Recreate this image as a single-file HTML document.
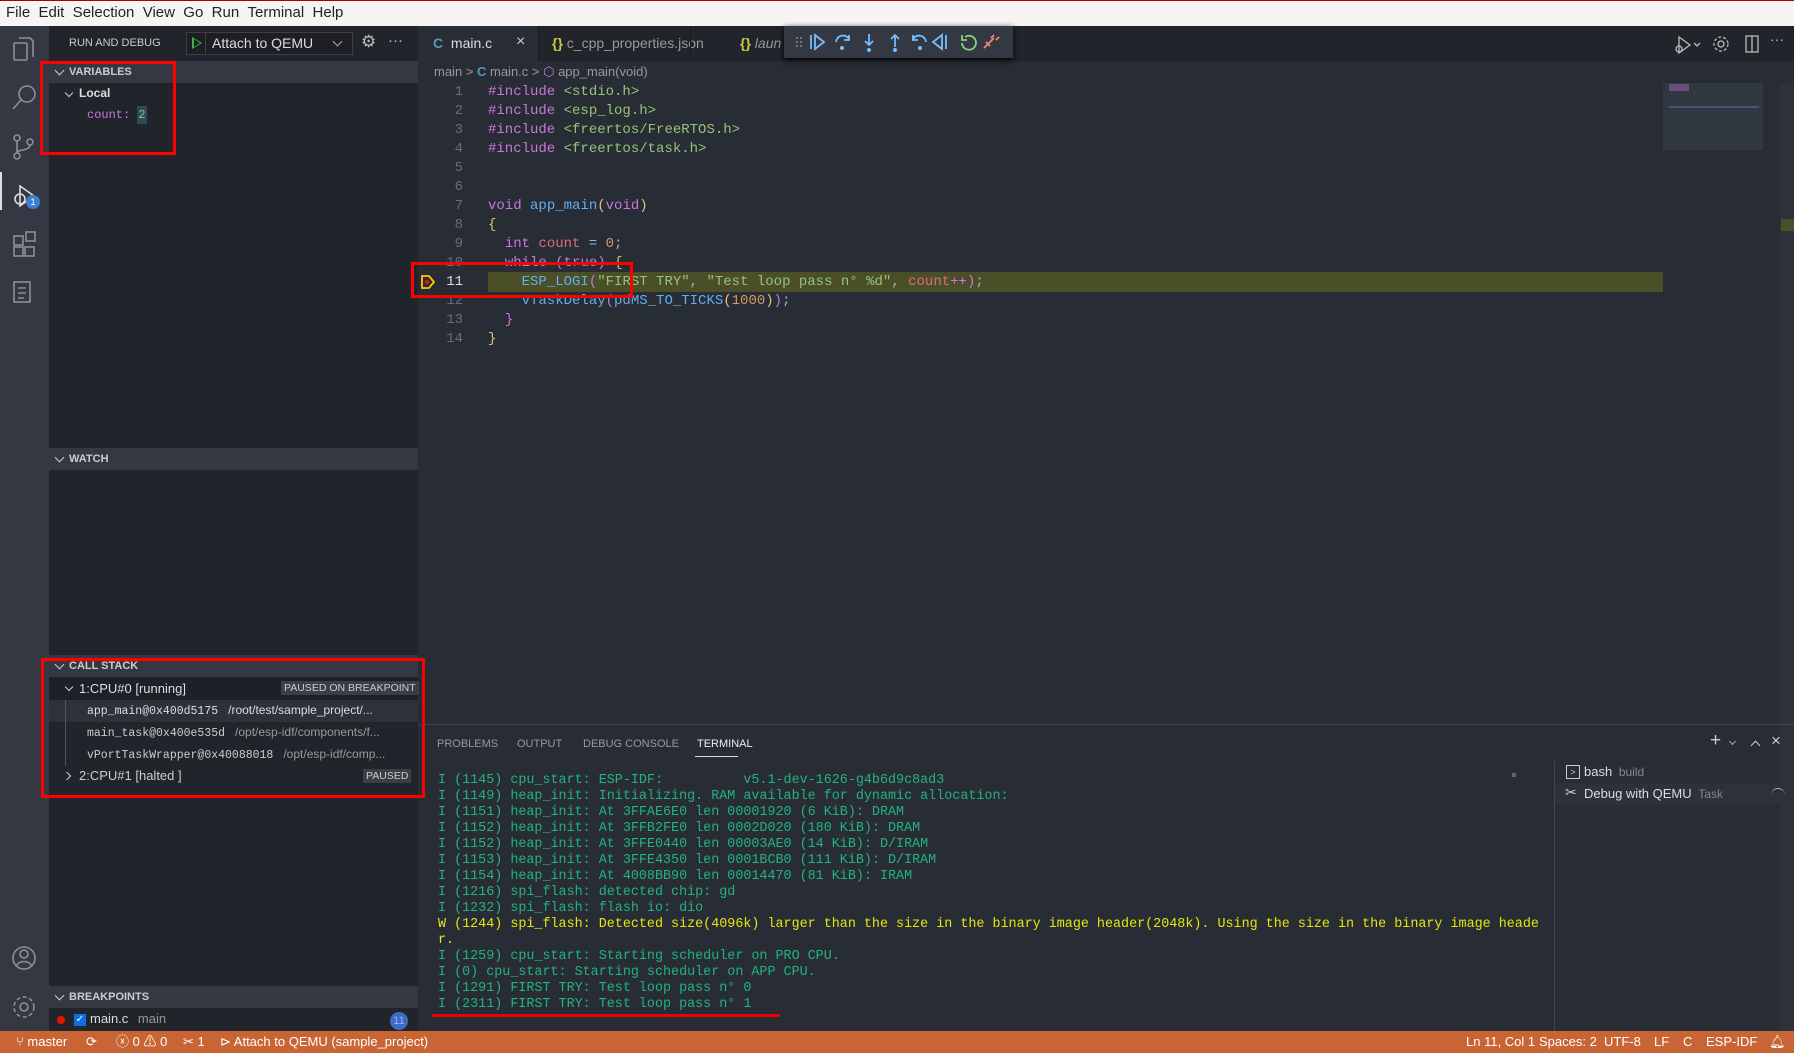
<!DOCTYPE html>
<html><head><meta charset="utf-8"><style>
*{box-sizing:border-box;margin:0;padding:0}
body{width:1794px;height:1053px;overflow:hidden;background:#282c34;font-family:"Liberation Sans",sans-serif;color:#abb2bf;position:relative;font-size:13px}
.a{position:absolute}
.mono{font-family:"Liberation Mono","DejaVu Sans Mono",monospace}
.hdr{position:absolute;left:49px;width:369px;height:22px;background:#333842;color:#ccc;font-weight:bold;font-size:11px;line-height:22px;padding-left:20px}
.hdr:before{content:"";position:absolute;left:7px;top:6px;width:6px;height:6px;border-right:1.5px solid #ccc;border-bottom:1.5px solid #ccc;transform:rotate(45deg)}
.red{position:absolute;border:3px solid #f00}
.ln{position:absolute;left:418px;width:45px;text-align:right;color:#636d83;font-size:14px}
.code{position:absolute;left:488px;font-size:14px;white-space:pre;color:#abb2bf}
.k{color:#c678dd}.s{color:#98c379}.f{color:#61afef}.n{color:#d19a66}.v{color:#e06c75}.y{color:#e5c07b}
.t{position:absolute;left:438px;font-size:13.4px;color:#23b37c;white-space:pre}
</style></head><body>
<!-- menu -->
<div class="a" style="left:0;top:0;width:1794px;height:26px;background:#f6f5f4;border-top:1px solid #a00"></div>
<div class="a" style="left:6px;top:4px;font-size:15px;color:#222;word-spacing:0">File&nbsp;&nbsp;Edit&nbsp;&nbsp;Selection&nbsp;&nbsp;View&nbsp;&nbsp;Go&nbsp;&nbsp;Run&nbsp;&nbsp;Terminal&nbsp;&nbsp;Help</div>
<!-- activity bar -->
<div class="a" style="left:0;top:26px;width:49px;height:1005px;background:#333842"></div>
<svg class="a" style="left:0;top:26px" width="49" height="1005" fill="none" stroke="#8a909a" stroke-width="1.6">
<rect x="14" y="17" width="13" height="17" rx="1"/><path d="M19 12h11l3 3v16"/>
<circle cx="27" cy="68" r="8"/><path d="M21 74l-8 9"/>
<circle cx="17" cy="112" r="3"/><circle cx="17" cy="130" r="3"/><circle cx="30" cy="116" r="3"/><path d="M17 115v12M30 119c0 6-13 4-13 8"/>
<path d="M20 160v20l14-10z" stroke="#ddd"/><circle cx="20" cy="173" r="5" stroke="#ddd"/>
<rect x="14" y="210" width="9" height="9"/><rect x="14" y="221" width="9" height="9"/><rect x="25" y="221" width="9" height="9"/><rect x="26" y="206" width="9" height="9"/>
<rect x="14" y="256" width="16" height="20"/><path d="M18 262h8M18 267h8M18 272h6"/>
<circle cx="24" cy="932" r="11"/><circle cx="24" cy="928" r="4"/><path d="M16 940c4-6 12-6 16 0"/>
<circle cx="24" cy="981" r="4"/><circle cx="24" cy="981" r="10" stroke-dasharray="4 2.5"/>
</svg>
<div class="a" style="left:0;top:172px;width:2px;height:38px;background:#ddd"></div>
<div class="a" style="left:26px;top:195px;width:14px;height:14px;border-radius:7px;background:#3d7fd6;color:#fff;font-size:9px;text-align:center;line-height:14px">1</div>
<!-- sidebar -->
<div class="a" style="left:49px;top:26px;width:369px;height:1005px;background:#21252b"></div>
<div class="a" style="left:69px;top:37px;font-size:11px;color:#ccc">RUN AND DEBUG</div>
<div class="a" style="left:186px;top:32px;width:167px;height:23px;background:#1d1f23;border:1px solid #3a3f4b"></div>
<div class="a" style="left:192px;top:37px;width:0;height:0;border-left:10px solid #3cb44b;border-top:6px solid transparent;border-bottom:6px solid transparent"></div>
<div class="a" style="left:194px;top:39px;width:0;height:0;border-left:6px solid #1d1f23;border-top:4px solid transparent;border-bottom:4px solid transparent"></div>
<div class="a" style="left:205px;top:32px;width:1px;height:23px;background:#3a3f4b"></div>
<div class="a" style="left:212px;top:35px;font-size:14px;color:#ddd">Attach to QEMU</div>
<div class="a" style="left:334px;top:38px;width:7px;height:7px;border-right:1.5px solid #aaa;border-bottom:1.5px solid #aaa;transform:rotate(45deg)"></div>
<div class="a" style="left:361px;top:32px;font-size:17px;color:#bbb">⚙</div>
<div class="a" style="left:388px;top:32px;font-size:15px;color:#bbb">···</div>
<div class="hdr" style="top:61px">VARIABLES</div>
<div class="a" style="left:66px;top:90px;width:6px;height:6px;border-right:1.5px solid #ccc;border-bottom:1.5px solid #ccc;transform:rotate(45deg)"></div>
<div class="a" style="left:79px;top:86px;font-size:12px;font-weight:bold;color:#ddd">Local</div>
<div class="a mono" style="left:87px;top:108px;font-size:12px;color:#c678dd">count: <span style="background:#2d4a5c;color:#98c379;padding:2px 1px">2</span></div>
<div class="hdr" style="top:448px">WATCH</div>
<div class="hdr" style="top:655px">CALL STACK</div>
<div class="a" style="left:49px;top:678px;width:369px;height:22px;background:#1d2026"></div>
<div class="a" style="left:66px;top:684px;width:6px;height:6px;border-right:1.5px solid #ccc;border-bottom:1.5px solid #ccc;transform:rotate(45deg)"></div>
<div class="a" style="left:79px;top:681px;font-size:13px;color:#ddd">1:CPU#0 [running]</div>
<div class="a" style="left:281px;top:681px;padding:1px 3px;background:#3a3e45;color:#ccc;font-size:10.5px">PAUSED ON BREAKPOINT</div>
<div class="a" style="left:49px;top:700px;width:369px;height:22px;background:#2c313a"></div>
<div class="a" style="left:65px;top:700px;width:1px;height:66px;background:#555"></div>
<div class="a" style="left:87px;top:703px;font-size:12px;color:#ddd"><span class="mono" style="font-size:11.5px">app_main@0x400d5175</span>&nbsp;&nbsp; /root/test/sample_project/...</div>
<div class="a" style="left:87px;top:725px;font-size:12px;color:#999"><span class="mono" style="font-size:11.5px;color:#ccc">main_task@0x400e535d</span>&nbsp;&nbsp; /opt/esp-idf/components/f...</div>
<div class="a" style="left:87px;top:747px;font-size:12px;color:#999"><span class="mono" style="font-size:11.5px;color:#ccc">vPortTaskWrapper@0x40088018</span>&nbsp;&nbsp; /opt/esp-idf/comp...</div>
<div class="a" style="left:64px;top:773px;width:6px;height:6px;border-right:1.5px solid #ccc;border-bottom:1.5px solid #ccc;transform:rotate(-45deg)"></div>
<div class="a" style="left:79px;top:768px;font-size:13px;color:#ccc">2:CPU#1 [halted ]</div>
<div class="a" style="left:363px;top:769px;padding:1px 3px;background:#3a3e45;color:#ccc;font-size:10.5px">PAUSED</div>
<div class="hdr" style="top:986px">BREAKPOINTS</div>
<div class="a" style="left:57px;top:1016px;width:8px;height:8px;border-radius:4px;background:#e51400"></div>
<div class="a" style="left:74px;top:1014px;width:12px;height:12px;background:#0e70e0;color:#fff;font-size:10px;line-height:12px;text-align:center">✓</div>
<div class="a" style="left:90px;top:1011px;font-size:13px;color:#ddd">main.c <span style="color:#999;margin-left:6px">main</span></div>
<div class="a" style="left:390px;top:1012px;width:18px;height:18px;border-radius:9px;background:#3d6bc4;color:#8fb0ff;font-size:11px;text-align:center;line-height:18px">11</div>
<div class="red" style="left:40px;top:61px;width:136px;height:94px"></div>
<div class="red" style="left:41px;top:658px;width:384px;height:140px"></div>
<!-- tabs -->
<div class="a" style="left:418px;top:26px;width:1376px;height:35px;background:#21252b"></div>
<div class="a" style="left:418px;top:26px;width:120px;height:35px;background:#282c34"></div>
<div class="a" style="left:433px;top:35px;font-size:14px;color:#ddd"><b style="color:#519aba">C</b>&nbsp; main.c</div>
<div class="a" style="left:516px;top:33px;font-size:16px;color:#ccc">×</div>
<div class="a" style="left:538px;top:26px;width:1px;height:35px;background:#181a1f"></div>
<div class="a" style="left:552px;top:35px;font-size:14px;color:#999"><b style="color:#cbcb41">{}</b> c_cpp_properties.json</div>
<div class="a" style="left:690px;top:26px;width:1px;height:35px;background:#181a1f"></div>
<div class="a" style="left:740px;top:35px;font-size:14px;color:#999"><b style="color:#cbcb41">{}</b> <i>laun</i></div>
<!-- debug toolbar -->
<div class="a" style="left:784px;top:26px;width:229px;height:32px;background:#333842;box-shadow:0 2px 6px #000"></div>
<svg class="a" style="left:784px;top:26px" width="229" height="32" fill="none" stroke-width="1.8">
<g fill="#888" stroke="none"><circle cx="13" cy="12" r="1"/><circle cx="17" cy="12" r="1"/><circle cx="13" cy="16" r="1"/><circle cx="17" cy="16" r="1"/><circle cx="13" cy="20" r="1"/><circle cx="17" cy="20" r="1"/></g>
<path d="M27 9v14M31 9l9 7-9 7z" stroke="#75beff"/>
<path d="M52 16a7 7 0 0 1 13-3M65 9v5h-5" stroke="#75beff"/><circle cx="58" cy="22" r="2" fill="#75beff" stroke="none"/>
<path d="M85 8v11M81 15l4 4 4-4" stroke="#75beff"/><circle cx="85" cy="24" r="2" fill="#75beff" stroke="none"/>
<path d="M111 21V9M107 13l4-4 4 4" stroke="#75beff"/><circle cx="111" cy="24" r="2" fill="#75beff" stroke="none"/>
<path d="M142 16a7 7 0 0 0-13-3M129 9v5h5" stroke="#75beff"/><circle cx="136" cy="22" r="2" fill="#75beff" stroke="none"/>
<path d="M162 9v14M158 9l-9 7 9 7z" stroke="#75beff"/>
<path d="M181 11a7 7 0 1 1-3 6M178 9v5h5" stroke="#89d185"/>
<path d="M200 22l10-10M202 16l4 4M207 12l3-3M212 14l3-3" stroke="#f48771"/>
</svg>
<svg class="a" style="left:1670px;top:30px" width="124" height="28" fill="none" stroke="#bbb" stroke-width="1.3">
<path d="M9 7v16l11-8z"/><circle cx="9" cy="19" r="3"/><path d="M24 13l3 3 3-3"/>
<circle cx="51" cy="14" r="3"/><circle cx="51" cy="14" r="7" stroke-dasharray="3 2"/>
<rect x="76" y="6" width="12" height="16"/><path d="M82 6v16"/>
</svg>
<div class="a" style="left:1770px;top:31px;color:#bbb;font-size:14px">···</div>
<!-- breadcrumb -->
<div class="a" style="left:434px;top:64px;font-size:13px;color:#999">main &gt; <b style="color:#519aba">C</b> main.c &gt; <span style="color:#b180d7">⬡</span> app_main(void)</div>
<!-- code -->
<div class="a" style="left:488px;top:272px;width:1175px;height:20px;background:#4b4f28"></div>
<div class="ln mono" style="top:83px;line-height:19px">1<br>2<br>3<br>4<br>5<br>6<br>7<br>8<br>9<br>10<br><span style="color:#ddd">11</span><br>12<br>13<br>14</div>
<svg class="a" style="left:420px;top:274px" width="16" height="16"><path d="M2 2h7l5 6-5 6H2z" fill="none" stroke="#ffcc00" stroke-width="1.8"/><circle cx="7" cy="8" r="2.3" fill="#e51400"/></svg>
<div class="code mono" style="top:83px;line-height:19px"><span class="k">#include</span> <span class="s">&lt;stdio.h&gt;</span>
<span class="k">#include</span> <span class="s">&lt;esp_log.h&gt;</span>
<span class="k">#include</span> <span class="s">&lt;freertos/FreeRTOS.h&gt;</span>
<span class="k">#include</span> <span class="s">&lt;freertos/task.h&gt;</span>


<span class="k">void</span> <span class="f">app_main</span><span class="y">(</span><span class="k">void</span><span class="y">)</span>
<span class="y">{</span>
  <span class="k">int</span> <span class="v">count</span> = <span class="n">0</span>;
  <span class="k">while</span> <span class="k">(true)</span> <span class="y">{</span>
    <span class="f">ESP_LOGI</span><span class="k">(</span><span class="s">"FIRST TRY"</span>, <span class="s">"Test loop pass n° %d"</span>, <span class="v">count</span><span class="k">++</span><span class="k">)</span>;
    <span class="f">vTaskDelay</span><span class="k">(</span><span class="f">pdMS_TO_TICKS</span><span class="y">(</span><span class="n">1000</span><span class="y">)</span><span class="k">)</span>;
  <span class="k">}</span>
<span class="y">}</span></div>
<div class="red" style="left:411px;top:262px;width:222px;height:36px"></div>
<!-- minimap -->
<div class="a" style="left:1663px;top:83px;width:100px;height:67px;background:#323842"></div>
<div class="a" style="left:1669px;top:84px;width:20px;height:7px;background:#6d4e7a"></div>
<div class="a" style="left:1669px;top:106px;width:90px;height:2px;background:#3e5a7a"></div>
<div class="a" style="left:1780px;top:83px;width:14px;height:948px;background:#2c313a"></div>
<div class="a" style="left:1781px;top:219px;width:13px;height:12px;background:#4b4f28"></div>
<!-- panel -->
<div class="a" style="left:418px;top:724px;width:1376px;height:1px;background:#3e4452"></div>
<div class="a" style="left:437px;top:738px;font-size:11px;color:#999;word-spacing:1px">PROBLEMS</div>
<div class="a" style="left:517px;top:738px;font-size:11px;color:#999">OUTPUT</div>
<div class="a" style="left:583px;top:738px;font-size:11px;color:#999">DEBUG CONSOLE</div>
<div class="a" style="left:697px;top:738px;font-size:11px;color:#eee">TERMINAL</div>
<div class="a" style="left:695px;top:756px;width:43px;height:1px;background:#ddd"></div>
<div class="a" style="left:1710px;top:730px;font-size:19px;color:#ccc">+</div>
<div class="a" style="left:1730px;top:739px;width:5px;height:5px;border-right:1px solid #aaa;border-bottom:1px solid #aaa;transform:rotate(45deg)"></div>
<div class="a" style="left:1752px;top:742px;width:7px;height:7px;border-left:1.3px solid #ccc;border-top:1.3px solid #ccc;transform:rotate(45deg)"></div>
<div class="a" style="left:1771px;top:731px;font-size:17px;color:#ccc">×</div>
<div class="a" style="left:1512px;top:773px;width:4px;height:4px;background:#666"></div>
<div class="a" style="left:1554px;top:761px;width:1px;height:270px;background:#3e4452"></div>
<div class="a" style="left:1566px;top:765px;width:14px;height:14px;border:1px solid #ccc;font-size:9px;color:#ccc;text-align:center;line-height:12px">&gt;</div>
<div class="a" style="left:1584px;top:764px;font-size:13px;color:#ddd">bash <span style="color:#888;font-size:12px;margin-left:3px">build</span></div>
<div class="a" style="left:1555px;top:783px;width:239px;height:22px;background:#2c313a"></div>
<div class="a" style="left:1565px;top:784px;font-size:14px;color:#ccc">✂</div>
<div class="a" style="left:1584px;top:786px;font-size:13px;color:#ddd">Debug with QEMU <span style="color:#888;font-size:12px;margin-left:3px">Task</span></div>
<div class="a" style="left:1771px;top:788px;width:14px;height:14px;border-radius:7px;border-top:1.5px solid #aaa"></div>
<div class="t mono" style="top:773px;line-height:16px">I (1145) cpu_start: ESP-IDF:          v5.1-dev-1626-g4b6d9c8ad3
I (1149) heap_init: Initializing. RAM available for dynamic allocation:
I (1151) heap_init: At 3FFAE6E0 len 00001920 (6 KiB): DRAM
I (1152) heap_init: At 3FFB2FE0 len 0002D020 (180 KiB): DRAM
I (1152) heap_init: At 3FFE0440 len 00003AE0 (14 KiB): D/IRAM
I (1153) heap_init: At 3FFE4350 len 0001BCB0 (111 KiB): D/IRAM
I (1154) heap_init: At 4008BB90 len 00014470 (81 KiB): IRAM
I (1216) spi_flash: detected chip: gd
I (1232) spi_flash: flash io: dio
<span style="color:#e5e510">W (1244) spi_flash: Detected size(4096k) larger than the size in the binary image header(2048k). Using the size in the binary image heade
r.</span>
I (1259) cpu_start: Starting scheduler on PRO CPU.
I (0) cpu_start: Starting scheduler on APP CPU.
I (1291) FIRST TRY: Test loop pass n° 0
I (2311) FIRST TRY: Test loop pass n° 1</div>
<div class="a" style="left:432px;top:1014px;width:348px;height:3px;background:#e00"></div>
<!-- status bar -->
<div class="a" style="left:0;top:1031px;width:1794px;height:22px;background:#c96534;color:#fff;font-size:13px;line-height:22px">
<span class="a" style="left:16px">⑂ master</span>
<span class="a" style="left:86px">⟳</span>
<span class="a" style="left:116px">ⓧ 0 ⚠ 0</span>
<span class="a" style="left:183px">✂ 1</span>
<span class="a" style="left:220px">⊳ Attach to QEMU (sample_project)</span>
<span class="a" style="left:1466px">Ln 11, Col 1</span>
<span class="a" style="left:1539px">Spaces: 2</span>
<span class="a" style="left:1604px">UTF-8</span>
<span class="a" style="left:1654px">LF</span>
<span class="a" style="left:1683px">C</span>
<span class="a" style="left:1706px">ESP-IDF</span>
<span class="a" style="left:1769px">🔔︎</span>
</div>
</body></html>
